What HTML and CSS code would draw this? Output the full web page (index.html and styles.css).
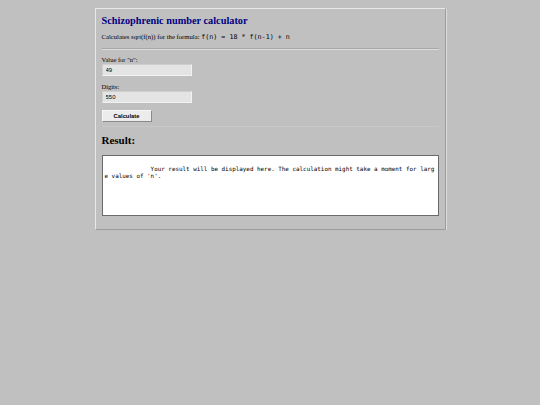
FILE: index.html
```html
<!DOCTYPE html>
<html>
<head>
<meta charset="utf-8">
<title>Schizophrenic number calculator</title>
<link rel="stylesheet" href="styles.css">
</head>
<body>
<div class="container">
  <h1 class="title">Schizophrenic number calculator</h1>
  <p class="intro">Calculates sqrt(f(n)) for the formula: <code class="formula">f(n) = 18 * f(n-1) + n</code></p>
  <hr class="rule">
  <form class="form">
    <div class="field">
      <label class="label" for="n">Value for "n":</label>
      <input class="input" id="n" type="text" value="49">
    </div>
    <div class="field">
      <label class="label" for="digits">Digits:</label>
      <input class="input" id="digits" type="text" value="550">
    </div>
    <button class="button" type="button">Calculate</button>
  </form>
  <h2 class="result-title">Result:</h2>
  <div class="result">             Your result will be displayed here. The calculation might take a moment for large values of 'n'.</div>
</div>
</body>
</html>
```
FILE: styles.css
```css
html, body {
  margin: 0;
  padding: 0;
  background: #c0c0c0;
}
body {
  padding-top: 8px;
  font-family: "Liberation Serif", "Times New Roman", serif;
  color: #000;
}
.container {
  width: 337px;
  margin: 0 auto;
  padding: 6px 6px 13px 6px;
  background: #c0c0c0;
  border: 1px solid;
  border-color: #e8e8e8 #9c9c9c #9c9c9c #e8e8e8;
  box-shadow: 1px 1px 0 #dcdcdc;
  display: flex;
  flex-direction: column;
  align-items: flex-start;
}
.title {
  font-size: 10.3px;
  color: #000080;
  margin: 0;
  line-height: 12px;
}
.intro {
  font-size: 6.7px;
  margin: 5px 0 0 0;
  line-height: 9px;
}
.formula {
  font-family: "DejaVu Sans Mono", monospace;
  font-size: 6.7px;
}
.rule {
  align-self: stretch;
  margin: 6px 0 0 0;
  border: 0;
  border-top: 1px solid #a8a8a8;
  border-bottom: 1px solid #dcdcdc;
  height: 0;
}
.form {
  align-self: stretch;
  display: flex;
  flex-direction: column;
  align-items: flex-start;
  margin: 0;
  padding-bottom: 4px;
  border-bottom: 1px solid #c8c8c8;
}
.field {
  display: flex;
  flex-direction: column;
  align-items: flex-start;
  margin-top: 6px;
}
.field + .field {
  margin-top: 7px;
}
.label {
  font-size: 6.5px;
  line-height: 8px;
}
.input {
  width: 90px;
  height: 12px;
  box-sizing: border-box;
  margin: 0;
  padding: 0 3px;
  font-family: "Liberation Sans", Arial, sans-serif;
  font-size: 6px;
  background: #e4e4e4;
  border: 1px solid;
  border-color: #cfcfcf #f2f2f2 #f2f2f2 #cfcfcf;
  color: #000;
}
.button {
  margin-top: 7px;
  width: 50px;
  height: 12px;
  box-sizing: border-box;
  padding: 0;
  font-family: "Liberation Sans", Arial, sans-serif;
  font-weight: bold;
  font-size: 5.8px;
  background: #ececec;
  border: 1px solid;
  border-color: #f8f8f8 #8a8a8a #8a8a8a #f8f8f8;
  color: #000;
}
.result-title {
  font-size: 11px;
  margin: 7px 0 0 0;
  line-height: 13px;
}
.result {
  align-self: stretch;
  margin-top: 8px;
  height: 61px;
  box-sizing: border-box;
  padding: 10px 2px 2px 2px;
  background: #fff;
  border: 1px solid #6a6a6a;
  font-family: "DejaVu Sans Mono", monospace;
  font-size: 5.9px;
  line-height: 7px;
  white-space: pre-wrap;
  word-break: break-all;
}
```
